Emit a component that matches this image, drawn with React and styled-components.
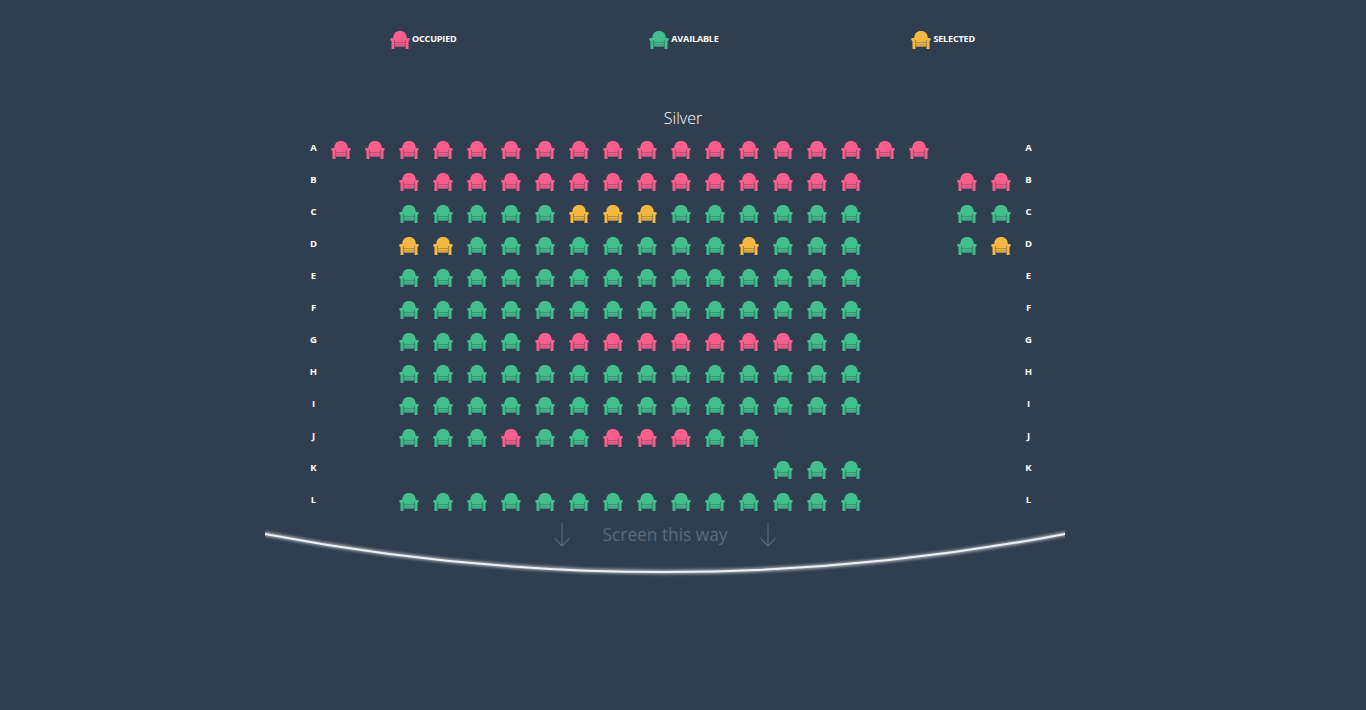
import styled, { createGlobalStyle } from "styled-components";

const GlobalStyle = createGlobalStyle`
  html, body {
    margin: 0;
    padding: 0;
    background: #303f50;
    font-family: "Open Sans", "Liberation Sans", sans-serif;
  }
`;

const SEAT_COLORS = {
  occupied: "#f95e8c",
  available: "#42be8c",
  selected: "#f5b841",
};

const Page = styled.div`
  height: 710px;
  padding-top: 31px;
  box-sizing: border-box;
  overflow: hidden;
`;

const Legend = styled.div`
  display: flex;
  justify-content: space-between;
  box-sizing: border-box;
  width: 586px;
  padding-right: 1px;
  margin: 0 auto 58px;
`;

const LegendItem = styled.div`
  display: flex;
  align-items: center;
  height: 18px;
  gap: 2px;
`;

const LegendLabel = styled.span`
  font-size: 9px;
  font-weight: 700;
  letter-spacing: -0.15px;
  color: #fff;
  text-transform: uppercase;
  position: relative;
  top: -2px;
`;

const Title = styled.h2`
  margin: 0 0 5px;
  font-size: 16px;
  font-weight: 300;
  line-height: 22px;
  color: #fff;
  text-align: center;
`;

const Hall = styled.div`
  width: 800px;
  margin: 0 auto;
  padding-right: 36px;
`;

const Row = styled.div`
  display: flex;
  height: 32px;
  padding-left: 38px;
`;

const RowLabel = styled.div`
  width: 21px;
  line-height: 27px;
  font-size: 9.5px;
  font-weight: 700;
  color: #fff;
  text-align: center;
`;

const SeatGrid = styled.div`
  display: grid;
  grid-template-columns: repeat(${(p) => p.$cols}, 34px);
  margin-right: ${(p) => p.$gap || 0}px;
`;

const SeatCell = styled.div`
  display: flex;
  align-items: center;
  justify-content: center;
  height: 32px;
  grid-column: ${(p) => p.$col + 1};
  grid-row: 1;
`;

const ScreenWrap = styled.div`
  position: relative;
  height: 60px;
`;

const ScreenCurve = styled.svg`
  display: block;
  position: absolute;
  left: 0;
  top: 6px;
`;

const Caption = styled.div`
  position: absolute;
  left: 0;
  right: 0;
  top: 4px;
  display: flex;
  justify-content: center;
  align-items: center;
  gap: 33px;
  height: 25px;
  font-size: 17.3px;
  color: #5b6a7a;
`;

const Seat = ({ type }) => (
  <svg width="20" height="18" viewBox="0 0 20 18" fill={SEAT_COLORS[type]}>
    <path d="M3.2 7.4C3.2 2.6 5.8 0 10 0s6.8 2.6 6.8 7.4V9H3.2z" />
    <path d="M1.4 6.9h2.2c.7 0 1 .6 1 1.3V18H1.5V10c-.8-.3-1.3-.9-1.3-1.7 0-.8.5-1.4 1.2-1.4z" />
    <path d="M18.6 6.9h-2.2c-.7 0-1 .6-1 1.3V18h3.1V10c.8-.3 1.3-.9 1.3-1.7 0-.8-.5-1.4-1.2-1.4z" />
    <path d="M4.6 8h10.8v7.6H4.6z" />
    <path d="M5 11h10v.9H5zM5 13.4h10v.9H5z" fill="#303f50" fillOpacity=".35" />
    <path d="M4.7 9v9M15.3 9v9" stroke="#303f50" strokeOpacity=".5" strokeWidth=".6" fill="none" />
  </svg>
);

const Arrow = () => (
  <svg width="16" height="24" viewBox="0 0 16 24" fill="none" stroke="#5b6a7a" strokeWidth="1.1">
    <path d="M8 0v23M.6 15.4 8 23l7.4-7.6" />
  </svg>
);

const full = (from, to, type = "available", overrides = {}) => {
  const seats = [];
  for (let col = from; col <= to; col++) seats.push({ col, type: overrides[col] || type });
  return seats;
};

const mark = (cols, type) => Object.fromEntries(cols.map((c) => [c, type]));

const ROWS = [
  { name: "A", main: full(0, 17, "occupied") },
  { name: "B", main: full(2, 15, "occupied"), side: ["occupied", "occupied"] },
  { name: "C", main: full(2, 15, "available", mark([7, 8, 9], "selected")), side: ["available", "available"] },
  { name: "D", main: full(2, 15, "available", mark([2, 3, 12], "selected")), side: ["available", "selected"] },
  { name: "E", main: full(2, 15) },
  { name: "F", main: full(2, 15) },
  { name: "G", main: full(2, 15, "available", mark([6, 7, 8, 9, 10, 11, 12, 13], "occupied")) },
  { name: "H", main: full(2, 15) },
  { name: "I", main: full(2, 15) },
  { name: "J", main: full(2, 12, "available", mark([5, 8, 9, 10], "occupied")) },
  { name: "K", main: full(13, 15) },
  { name: "L", main: full(2, 15) },
];

const LEGEND = [
  { type: "occupied", label: "Occupied" },
  { type: "available", label: "Available" },
  { type: "selected", label: "Selected" },
];

const CURVE = "M-10 8Q400 88 810 8";

const App = () => (
  <Page>
    <GlobalStyle />
    <Legend>
      {LEGEND.map((item) => (
        <LegendItem key={item.type}>
          <Seat type={item.type} />
          <LegendLabel>{item.label}</LegendLabel>
        </LegendItem>
      ))}
    </Legend>
    <Title>Silver</Title>
    <Hall>
      {ROWS.map((row) => (
        <Row key={row.name}>
          <RowLabel>{row.name}</RowLabel>
          <SeatGrid $cols={18} $gap={14}>
            {row.main.map((s) => (
              <SeatCell key={s.col} $col={s.col}>
                <Seat type={s.type} />
              </SeatCell>
            ))}
          </SeatGrid>
          <SeatGrid $cols={2}>
            {(row.side || []).map((type, i) => (
              <SeatCell key={i} $col={i}>
                <Seat type={type} />
              </SeatCell>
            ))}
          </SeatGrid>
          <RowLabel>{row.name}</RowLabel>
        </Row>
      ))}
      <ScreenWrap>
        <ScreenCurve width="800" height="54" viewBox="0 0 800 54">
          <defs>
            <filter id="glow" x="-5%" y="-50%" width="110%" height="200%">
              <feGaussianBlur stdDeviation="1.4" />
            </filter>
          </defs>
          <path d={CURVE} fill="none" stroke="#fff" strokeOpacity=".6" strokeWidth="4" filter="url(#glow)" />
          <path d={CURVE} fill="none" stroke="#eef0f2" strokeWidth="2" />
        </ScreenCurve>
        <Caption>
          <Arrow />
          <span>Screen this way</span>
          <Arrow />
        </Caption>
      </ScreenWrap>
    </Hall>
  </Page>
);

export default App;
